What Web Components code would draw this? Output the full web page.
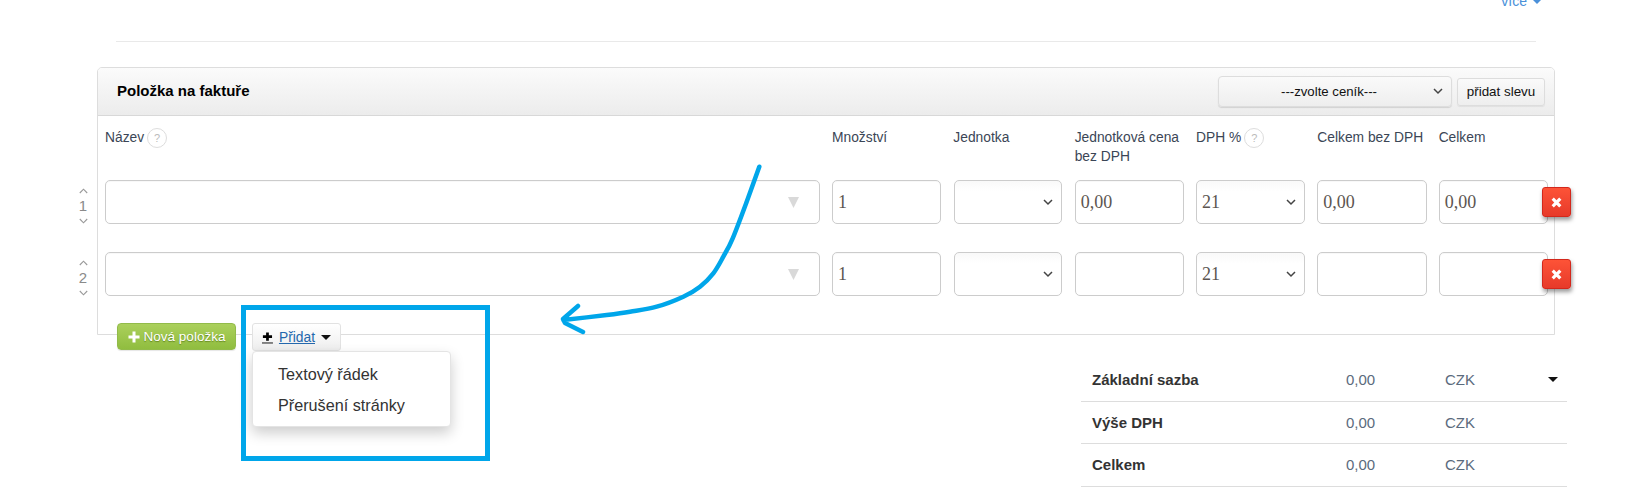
<!DOCTYPE html>
<html lang="cs"><head><meta charset="utf-8"><title>Položka na faktuře</title>
<style>html,body{margin:0;padding:0;background:#fff;overflow:hidden;height:502px}body{font:13px/19px "Liberation Sans",Arial,sans-serif;color:#333}</style>
</head><body>
<invoice-page></invoice-page>
<script>
const chev='<svg width="10" height="7" viewBox="0 0 10 7"><path d="M1 1l4 4 4-4" fill="none" stroke="#444" stroke-width="1.5"/></svg>';
function def(name,css,html){
  customElements.define(name,class extends HTMLElement{
    connectedCallback(){
      if(this.shadowRoot)return;
      const r=this.attachShadow({mode:'open'});
      r.innerHTML='<style>'+css+'</style>'+(typeof html==='function'?html(this):html);
    }
  });
}
function smooth(p){
  let d='M'+p[0][0]+' '+p[0][1];
  for(let i=0;i<p.length-1;i++){
    const a=p[Math.max(i-1,0)],b=p[i],c=p[i+1],e=p[Math.min(i+2,p.length-1)];
    d+='C'+(b[0]+(c[0]-a[0])/6).toFixed(1)+' '+(b[1]+(c[1]-a[1])/6).toFixed(1)+' '+(c[0]-(e[0]-b[0])/6).toFixed(1)+' '+(c[1]-(e[1]-b[1])/6).toFixed(1)+' '+c[0]+' '+c[1];
  }
  return d;
}
const curve=smooth([[759.3,166.7],[746.7,201.7],[732.7,238.3],[723.3,256.7],[713.3,273.3],[700,286.7],[683.3,296.7],[656.7,306.7],[630,311.7],[606.7,315],[563.3,320]]);
def('help-badge',`:host{display:inline-flex;width:20px;height:20px;box-sizing:border-box;border:1px solid #ddd;border-radius:50%;align-items:center;justify-content:center;color:#bbb;font-size:11px;line-height:1;vertical-align:top}`,'<slot></slot>');
def('field-label',`:host{display:block;font-size:13.8px;line-height:19px;color:#3b4656}.w{display:flex;gap:3px;align-items:flex-start}`,`<div class="w"><span><slot></slot></span><slot name="help"></slot></div>`);
def('text-field',`:host{display:flex;align-items:center;box-sizing:border-box;height:100%;border:1px solid #ccc;border-radius:5px;padding:0 5px;background:#fff;font:18px/1 "Liberation Serif",serif;color:#5c5550;position:relative;box-shadow:inset 0 1px 1px rgba(0,0,0,.03)}`,`<slot></slot>`);
def('name-field',`:host{display:flex;align-items:center;justify-content:flex-end;box-sizing:border-box;height:100%;border:1px solid #ccc;border-radius:5px;padding:0 20px 0 5px;background:#fff;box-shadow:inset 0 1px 1px rgba(0,0,0,.03)}svg{display:block}`,`<svg width="11" height="11" viewBox="0 0 11 11"><path d="M0 0h11L5.5 11z" fill="#d9d9d9"/></svg>`);
def('select-field',`:host{display:flex;align-items:center;justify-content:space-between;box-sizing:border-box;height:100%;border:1px solid #ccc;border-radius:5px;padding:0 8px 0 5px;background:linear-gradient(#f9f9f9,#fff 25%);font:18px/1 "Liberation Serif",serif;color:#5c5550}svg{display:block}`,`<span><slot></slot></span>${chev}`);
def('row-number',`:host{display:flex;flex-direction:column;align-items:center;justify-content:center;color:#8a8a8a;font-size:15px;line-height:18px;gap:3px;width:16px;padding-top:8px;box-sizing:border-box}svg{display:block}`,`<svg width="9" height="6" viewBox="0 0 9 6"><path d="M.8 5L4.5 1.2 8.200 5" fill="none" stroke="#999" stroke-width="1.1"/></svg><slot></slot><svg width="9" height="6" viewBox="0 0 9 6"><path d="M.8 1l3.7 3.8L8.200 1" fill="none" stroke="#999" stroke-width="1.1"/></svg>`);
def('delete-button',`:host{position:absolute;right:-23px;top:7px;width:29px;height:30px;box-sizing:border-box;display:flex;align-items:center;justify-content:center;border:1px solid #d3281c;border-radius:3px;background:linear-gradient(#fd5337,#e73a2a);box-shadow:1px 3px 4px rgba(0,0,0,.4)}svg{display:block}`,`<svg width="11" height="11" viewBox="0 0 11 11"><path d="M1.700 1.700l7.600 7.600M9.300 1.700L1.700 9.300" stroke="#fff" stroke-width="3.200" fill="none"/></svg>`);
def('invoice-row',`:host{display:grid;grid-template-columns:18px 715px repeat(6,109.33px);column-gap:12px;margin-left:-23px;height:var(--h,42px);margin-bottom:var(--mb,30px)}.last{position:relative;height:100%}.c{height:100%;min-width:0}.u{margin:0 -1px 0 1px;width:108px}`,
 t=>{const v=t.dataset;return `<row-number>${v.n}</row-number><div class="c"><name-field></name-field></div><div class="c"><text-field>1</text-field></div><div class="c u"><select-field></select-field></div><div class="c"><text-field>${v.price||''}</text-field></div><div class="c"><select-field>21</select-field></div><div class="c"><text-field>${v.price||''}</text-field></div><div class="c last"><text-field>${v.price||''}</text-field><delete-button></delete-button></div>`});
def('panel-select',`:host{display:flex;align-items:center;box-sizing:border-box;width:234px;height:31px;border:1px solid #ddd;border-radius:4px;background:linear-gradient(#fafafa,#eee);box-shadow:0 1px 1px rgba(0,0,0,.12);color:#111;font-size:13.2px;padding:0 8px 0 6px}span{flex:1;text-align:center}svg{display:block}`,`<span><slot></slot></span>${chev}`);
def('plain-button',`:host{display:flex;align-items:center;justify-content:center;box-sizing:border-box;width:88px;height:28px;border:1px solid #ddd;border-radius:3px;background:linear-gradient(#fafafa,#eee);color:#111;font-size:13.4px;box-shadow:0 1px 1px rgba(0,0,0,.06)}`,`<slot></slot>`);
def('panel-header',`:host{display:flex;align-items:center;box-sizing:border-box;height:48px;padding:0 9px 0 19px;background:linear-gradient(#fbfbfb,#ececec);border-bottom:1px solid #d8d8d8;border-radius:4px 4px 0 0}h2{margin:0;font-size:15px;line-height:19px;font-weight:bold;color:#000;flex:1;position:relative;top:-1px}.r{display:flex;gap:5px;align-items:center}`,`<h2><slot></slot></h2><div class="r"><panel-select>---zvolte ceník---</panel-select><plain-button>přidat slevu</plain-button></div>`);
def('label-row',`:host{display:grid;grid-template-columns:715px repeat(6,109.33px);column-gap:12px;margin-left:7px;height:64px;padding-top:12px;box-sizing:border-box}`,
 `<field-label>Název<help-badge slot="help">?</help-badge></field-label><field-label>Množství</field-label><field-label>Jednotka</field-label><field-label>Jednotková cena bez DPH</field-label><field-label>DPH %<help-badge slot="help">?</help-badge></field-label><field-label>Celkem bez DPH</field-label><field-label>Celkem</field-label>`);
def('new-button',`:host{display:flex;align-items:center;justify-content:center;gap:4px;box-sizing:border-box;width:119px;height:27px;border:1px solid #92bb4a;border-radius:4px;background:linear-gradient(#abd05c,#90bd3f);color:#fff;font-size:13.5px;text-shadow:0 1px 1px rgba(60,90,0,.55);box-shadow:0 1px 1px rgba(0,0,0,.1)}svg{display:block}`,`<svg width="12" height="12" viewBox="0 0 12 12"><path d="M6 .5v11M.5 6h11" stroke="#fff" stroke-width="3"/></svg><slot></slot>`);
def('add-button',`:host{display:flex;align-items:center;gap:6px;box-sizing:border-box;width:89px;height:28px;padding:0 9px;border:1px solid #e2e2e2;border-radius:3px;background:linear-gradient(#fff,#eeeeee);font-size:13.8px;position:relative}a{color:#2468ad;text-decoration:underline}svg{display:block}i{width:0;height:0;border:5px solid transparent;border-top:5px solid #111;border-bottom:0}`,`<svg width="12" height="13" viewBox="0 0 12 13"><path d="M6 1v9M1 5.500h10" stroke="#000" stroke-width="3"/><path d="M0 12.500h12" stroke="#000" stroke-width="1"/></svg><a href="#"><slot></slot></a><i></i>`);
def('drop-menu',`:host{position:absolute;left:135px;top:28px;width:199px;height:76px;box-sizing:border-box;display:flex;flex-direction:column;padding:7px 0 6px;border:1px solid #e4e4e4;border-radius:4px;background:#fff;box-shadow:0 6px 14px rgba(0,0,0,.2);font-size:16.2px;line-height:31px;color:#333}div{padding-left:25px}`,`<div>Textový řádek</div><div>Přerušení stránky</div>`);
def('panel-footer',`:host{display:flex;gap:16px;position:relative;margin-left:19px}`,`<new-button>Nová položka</new-button><add-button>Přidat</add-button><drop-menu></drop-menu>`);
def('invoice-panel',`:host{display:block;box-sizing:border-box;height:268px;border:1px solid #ddd;border-radius:5px 5px 0 0}`,`<panel-header>Položka na faktuře</panel-header><label-row></label-row><slot></slot>`);
def('summary-row',`:host{display:grid;grid-template-columns:254px 99px 103px 1fr;align-items:center;height:42.5px;box-sizing:border-box;border-bottom:1px solid #ddd;padding-left:11px;font-size:15px;color:#5b6b7d}b{color:#333}i{display:block;width:0;height:0;border:5px solid transparent;border-top:5px solid #111;border-bottom:0}`,
 t=>`<b>${t.dataset.l}</b><span>0,00</span><span>CZK</span>${t.hasAttribute('data-c')?'<i></i>':''}`);
def('summary-table',`:host{display:block;width:486px;margin:24px -12px 0 auto}`,`<slot></slot>`);
def('top-link',`:host{display:flex;justify-content:flex-end;align-items:center;gap:5px;margin:-8px -6px 0 0;height:19px;font-size:14px;color:#4a90d9}i{width:0;height:0;border:5px solid transparent;border-top:5px solid #4a90d9;border-bottom:0}`,`<slot></slot><i></i>`);
def('page-rule',`:host{display:block;height:1px;background:#e9e9e9;margin:30px 0 25px}`,``);
def('call-out',`:host{position:absolute;left:0;top:0;width:1630px;height:502px;pointer-events:none;display:block}svg{position:absolute;left:0;top:0}`,
 `<svg width="1630" height="502" viewBox="0 0 1630 502" fill="none" stroke="#00a6ea"><rect x="243.500" y="307.500" width="244" height="151" stroke-width="5"/><path d="${curve}M578 306L563 319L565 323L583 332" stroke-width="4.500" stroke-linecap="round" stroke-linejoin="round"/></svg>`);
def('invoice-page',`:host{display:block;position:relative;width:1630px;height:502px;overflow:hidden}.col{margin-left:97px;width:1458px}.hr{margin:0 19px 0 19px}`,
 `<div class="col"><div class="hr"><top-link>více</top-link><page-rule></page-rule></div>
 <invoice-panel><invoice-row data-n="1" data-price="0,00" style="--h:43px;--mb:29px"></invoice-row><invoice-row data-n="2" style="--h:42px;--mb:29px"></invoice-row><panel-footer></panel-footer></invoice-panel>
 <summary-table><summary-row data-l="Základní sazba" data-c></summary-row><summary-row data-l="Výše DPH"></summary-row><summary-row data-l="Celkem"></summary-row></summary-table></div><call-out></call-out>`);
</script>
</body></html>
